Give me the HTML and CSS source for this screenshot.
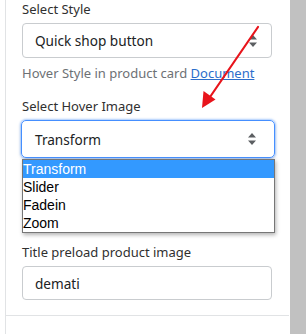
FILE: index.html
```html
<!DOCTYPE html>
<html>
<head>
<meta charset="utf-8">
<link rel="stylesheet" href="styles.css">
</head>
<body>
<div class="page">
  <div class="panel">
    <div class="section">
      <div class="label">Select Style</div>
      <div class="select">
        <span>Quick shop button</span>
        <svg class="caret" width="8" height="12" viewBox="0 0 8 12"><path d="M4 0 L8 4.5 H0 Z M4 12 L8 7.5 H0 Z" fill="#5c5f62"/></svg>
      </div>
      <div class="help">Hover Style in product card <a href="#">Document</a></div>

      <div class="label label-2">Select Hover Image</div>
      <div class="select-wrap">
        <div class="select focused">
          <span>Transform</span>
          <svg class="caret" width="8" height="12" viewBox="0 0 8 12"><path d="M4 0 L8 4.5 H0 Z M4 12 L8 7.5 H0 Z" fill="#5c5f62"/></svg>
        </div>
        <ul class="dropdown">
          <li class="active">Transform</li>
          <li>Slider</li>
          <li>Fadein</li>
          <li>Zoom</li>
        </ul>
      </div>

      <div class="label label-3">Title preload product image</div>
      <div class="input">demati</div>
    </div>
  </div>
  <div class="scrollbar"></div>
  <svg class="annot" width="306" height="334" viewBox="0 0 306 334">
    <line x1="258" y1="27" x2="210" y2="97" stroke="#e8141b" stroke-width="2.2" stroke-linecap="round"/>
    <path d="M202 108 L203.5 91 L215.5 99.5 Z" fill="#e8141b"/>
  </svg>
</div>
</body>
</html>
```
FILE: styles.css
```css
html, body {
  margin: 0;
  padding: 0;
  background: #fff;
}
.page {
  position: relative;
  display: flex;
  width: 306px;
  height: 334px;
  overflow: hidden;
  font-family: "Noto Sans", "Open Sans", sans-serif;
  color: #202223;
}
.panel {
  margin-left: 5px;
  width: 283px;
  border-left: 1px solid #e1e3e5;
}
.section {
  padding: 0 16px 0 16px;
  height: 316px;
  border-bottom: 1px solid #e1e3e5;
  margin-top: -1px;
}
.label {
  font-size: 13px;
  line-height: 20px;
  color: #303030;
}
.select {
  margin-top: 4px;
  width: 250px;
  height: 35px;
  box-sizing: border-box;
  border: 1px solid #c9cccf;
  border-radius: 4px;
  display: flex;
  align-items: center;
  justify-content: space-between;
  padding: 0 14px 0 12px;
  font-size: 13.6px;
  color: #202223;
}
.select .caret {
  display: block;
}
.help {
  margin-top: 5px;
  font-size: 13px;
  line-height: 20px;
  color: #6d7175;
}
.help a {
  color: #2c6ecb;
  text-decoration: underline;
}
.label-2 {
  margin-top: 13px;
}
.select-wrap {
  position: relative;
  margin-top: 0;
}
.select.focused {
  margin-left: -1px;
  width: 254px;
  height: 38px;
  border: 1px solid #458fff;
  border-radius: 5px;
  box-shadow: 0 0 2px 1px rgba(69, 143, 255, 0.45), 0 2px 4px rgba(0,0,0,0.12);
  padding: 0 18px 0 13px;
}
.dropdown {
  position: absolute;
  left: 0;
  top: 39px;
  width: 251px;
  margin: 0;
  padding: 0;
  list-style: none;
  background: #fff;
  border: 1px solid #767676;
  box-shadow: 1px 2px 4px rgba(0,0,0,0.3);
  font-family: "Liberation Sans", Arial, sans-serif;
  font-size: 14px;
  color: #000;
  z-index: 2;
}
.dropdown li {
  height: 18px;
  line-height: 18px;
  padding-left: 0;
}
.dropdown li.active {
  background: #3399ff;
  color: #fff;
}
.label-3 {
  margin-top: 84px;
}
.input {
  margin-top: 4px;
  width: 250px;
  height: 34px;
  box-sizing: border-box;
  border: 1px solid #c9cccf;
  border-radius: 4px;
  padding: 0 12px;
  display: flex;
  align-items: center;
  font-size: 13.6px;
  color: #202223;
}
.scrollbar {
  margin-left: 1px;
  width: 16px;
  height: 334px;
  background: #c1c1c1;
}
.annot {
  position: absolute;
  left: 0;
  top: 0;
  pointer-events: none;
  z-index: 5;
}
```
